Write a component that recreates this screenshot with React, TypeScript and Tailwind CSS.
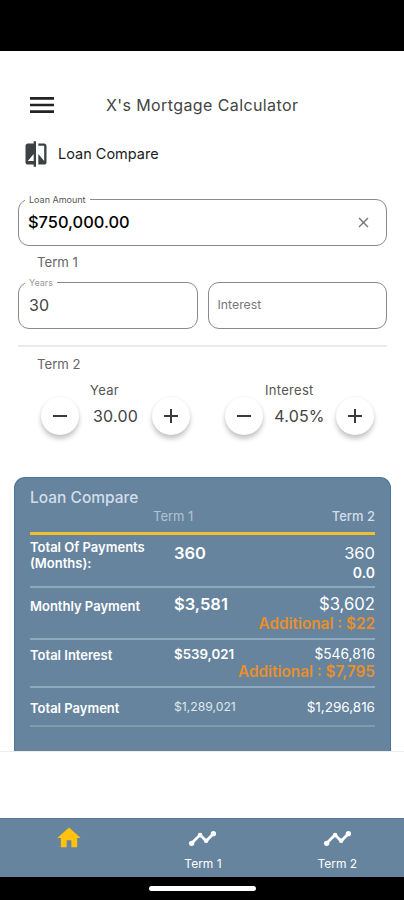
import { useState } from 'react'
import { MdAdd, MdClose, MdCompare, MdHome, MdMenu, MdRemove } from 'react-icons/md'

interface FieldProps {
  label: string
  labelClass?: string
  value: string
  valueClass: string
  clearable?: boolean
  onClear?: () => void
}

function OutlinedField({ label, labelClass, value, valueClass, clearable, onClear }: FieldProps) {
  return (
    <div className="relative flex h-[47px] flex-1 items-center justify-between rounded-[11px] border border-[#8a8a8a] pr-[14px] pb-[1px] pl-[9px]">
      {value && (
        <span className={`absolute -top-[6px] left-[6px] bg-white px-[4px] text-[9px] leading-[12px] ${labelClass}`}>
          {label}
        </span>
      )}
      <span className={valueClass}>{value || label}</span>
      {clearable && (
        <button onClick={onClear} aria-label="Clear">
          <MdClose className="size-[17px] text-[#777]" />
        </button>
      )}
    </div>
  )
}

function RoundButton({ kind, onClick }: { kind: 'minus' | 'plus'; onClick: () => void }) {
  const Icon = kind === 'minus' ? MdRemove : MdAdd
  return (
    <button
      className="flex size-[38px] items-center justify-center rounded-full bg-white shadow-[0_4px_5px_rgba(0,0,0,0.22),0_0_3px_rgba(0,0,0,0.06)]"
      onClick={onClick}
      aria-label={kind}
    >
      <Icon className="size-[24px] text-[#3a3a3a]" />
    </button>
  )
}

interface StepperProps {
  label: string
  labelClass: string
  value: string
  onStep: (direction: number) => void
}

function Stepper({ label, labelClass, value, onStep }: StepperProps) {
  return (
    <div className="flex w-[149px] flex-col">
      <div className={`h-[15px] text-[13px] leading-[16px] tracking-[0.3px] text-[#555] ${labelClass}`}>{label}</div>
      <div className="flex items-center justify-between">
        <RoundButton kind="minus" onClick={() => onStep(-1)} />
        <span className="text-[16px] tracking-[0.2px] text-[#444]">{value}</span>
        <RoundButton kind="plus" onClick={() => onStep(1)} />
      </div>
    </div>
  )
}

function CompareCard() {
  return (
    <section className="mx-[14px] h-[274px] w-[377px] rounded-t-[11px] border border-b-0 border-[#4c7597] bg-[#66849e] px-[15px] pt-[10px] text-white">
      <h2 className="h-[18px] text-[15.5px] leading-[20px] font-medium text-[#d3dee8]">Loan Compare</h2>
      <div className="flex h-[26px] justify-between pl-[123px] text-[13px] leading-[20px]">
        <span className="text-[#b3c3d1]">Term 1</span>
        <span className="font-medium text-[#d3dee8]">Term 2</span>
      </div>
      <div className="h-[3px] bg-[#f0bf34]" />

      <div className="flex h-[53px] border-b-2 border-[#8fa8bb]">
        <div className="w-[144px] pt-[4px] text-[13px] leading-[16px] font-semibold">
          Total Of Payments
          <br />
          (Months):
        </div>
        <div className="pt-[8px] text-[16.5px] leading-[20px] font-semibold">360</div>
        <div className="flex-1 pt-[8px] text-right text-[16.5px] leading-[20px]">
          360
          <div className="text-[14px] leading-[19px] font-semibold">0.0</div>
        </div>
      </div>

      <div className="flex h-[52px] border-b-2 border-[#8fa8bb]">
        <div className="w-[144px] pt-[10px] text-[13px] leading-[16px] font-semibold">Monthly Payment</div>
        <div className="w-[60px] pt-[6px] text-[16.5px] leading-[20px] font-semibold">$3,581</div>
        <div className="flex-1 pt-[6px] text-right text-[16.7px] leading-[20px]">
          $3,602
          <div className="text-[15.3px] leading-[19px] font-semibold text-[#e88f2c]">Additional : $22</div>
        </div>
      </div>

      <div className="flex h-[48px] border-b-2 border-[#8fa8bb]">
        <div className="w-[144px] pt-[7px] text-[13px] leading-[16px] font-semibold">Total Interest</div>
        <div className="w-[62px] pt-[6px] text-[13.3px] leading-[16px] font-semibold">$539,021</div>
        <div className="flex-1 pt-[6px] text-right text-[13.8px] leading-[16px]">
          $546,816
          <div className="-ml-[10px] text-[15.3px] leading-[19px] font-semibold whitespace-nowrap text-[#e88f2c]">
            Additional : $7,795
          </div>
        </div>
      </div>

      <div className="flex h-[39px] border-b-2 border-[#7f9cab]">
        <div className="w-[144px] pt-[12px] text-[13px] leading-[16px] font-semibold">Total Payment</div>
        <div className="pt-[11px] text-[12.2px] leading-[16px] text-[#dfe7ee]">$1,289,021</div>
        <div className="flex-1 pt-[11px] text-right text-[13.5px] leading-[16px]">$1,296,816</div>
      </div>
    </section>
  )
}

function TimelineIcon() {
  return (
    <svg viewBox="0 0 24 24" className="size-[29px]" fill="currentColor">
      <path d="M3 16 10 9l5 5 6-6" fill="none" stroke="currentColor" strokeWidth="2.3" />
      <circle cx="3" cy="16" r="2.2" />
      <circle cx="10" cy="9.2" r="1.9" />
      <circle cx="15" cy="13.8" r="1.9" />
      <circle cx="21" cy="8" r="2.2" />
    </svg>
  )
}

function NavItem({ label }: { label: string }) {
  return (
    <button className="flex flex-1 flex-col items-center pt-[5px] pl-[1px] text-white">
      <TimelineIcon />
      <span className="mt-[3px] text-[12px] leading-[16px]">{label}</span>
    </button>
  )
}

export default function App() {
  const [amount, setAmount] = useState('$750,000.00')
  const [year, setYear] = useState(30)
  const [rate, setRate] = useState(4.05)

  return (
    <div className="flex h-[900px] w-[404px] flex-col overflow-hidden bg-white font-['Inter','Roboto',sans-serif]">
      <div className="h-[51px] shrink-0 bg-black" />

      <main className="flex h-[700px] shrink-0 flex-col overflow-hidden">
        <header className="mt-[38px] flex h-[32px] items-center pl-[26px]">
          <button aria-label="Menu">
            <MdMenu className="size-[32px] text-[#222]" />
          </button>
          <h1 className="ml-[48px] text-[16px] tracking-[0.4px] text-[#444]">X's Mortgage Calculator</h1>
        </header>

        <div className="mt-[18px] flex h-[29px] items-center pl-[22px]">
          <MdCompare className="size-[28px] text-[#3c4144]" />
          <span className="ml-[8px] text-[14.5px] text-[#1c1c1c]">Loan Compare</span>
        </div>

        <div className="mx-[18px] mt-[31px] flex w-[369px]">
          <OutlinedField
            label="Loan Amount"
            labelClass="text-[#555]"
            value={amount}
            valueClass="text-[16.4px] font-medium text-black"
            clearable
            onClear={() => setAmount('')}
          />
        </div>

        <div className="mt-[7px] h-[18px] pl-[37px] text-[13.2px] leading-[18px] text-[#666]">Term 1</div>
        <div className="mx-[18px] mt-[11px] flex w-[369px] gap-[10px]">
          <OutlinedField label="Years" labelClass="text-[#999]" value="30" valueClass="pl-[1px] text-[16px] text-[#444]" />
          <OutlinedField label="Interest" value="" valueClass="text-[12.3px] text-[#777]" />
        </div>

        <div className="mx-[18px] mt-[16px] h-[2px] w-[369px] shrink-0 bg-[#ebebeb]" />
        <div className="mt-[8px] h-[18px] pl-[37px] text-[13.2px] leading-[18px] text-[#666]">Term 2</div>

        <div className="mt-[9px] flex gap-[35px] pl-[41px]">
          <Stepper label="Year" labelClass="pl-[49px]" value={year.toFixed(2)} onStep={(d) => setYear(year + d)} />
          <Stepper
            label="Interest"
            labelClass="pl-[40px]"
            value={`${rate.toFixed(2)}%`}
            onStep={(d) => setRate(rate + d * 0.05)}
          />
        </div>

        <div className="mt-[42px]">
          <CompareCard />
        </div>
      </main>

      <div className="h-[67px] shrink-0 border-t border-[#ececec]" />

      <nav className="flex h-[59px] shrink-0 border-t border-[#55799a] bg-[#66849e]">
        <button className="flex flex-1 justify-center pt-[5px] pl-[2px]" aria-label="Home">
          <MdHome className="size-[28px] text-[#ffc20e]" />
        </button>
        <NavItem label="Term 1" />
        <NavItem label="Term 2" />
      </nav>

      <div className="flex h-[23px] shrink-0 justify-center bg-black pt-[9px]">
        <div className="h-[5px] w-[107px] rounded-full bg-white" />
      </div>
    </div>
  )
}
